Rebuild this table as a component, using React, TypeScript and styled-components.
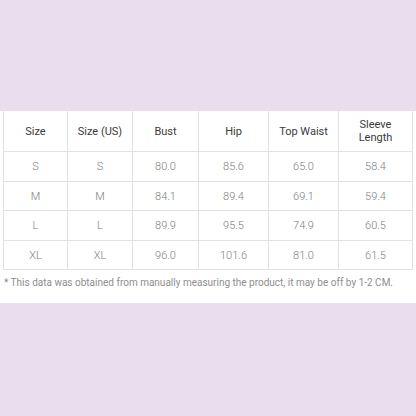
import React from 'react';
import styled, { createGlobalStyle } from 'styled-components';

const GlobalStyle = createGlobalStyle`
  html, body {
    margin: 0;
    padding: 0;
    background: #e9ddee;
    width: 416px;
    height: 416px;
    overflow: hidden;
  }
  body {
    font-family: Roboto, "Liberation Sans", sans-serif;
  }
`;

const Page = styled.div`
  padding-top: 111px;
`;

const Sheet = styled.section`
  background: #ffffff;
  height: 192px;
  padding: 0 4px 0 3px;
  box-sizing: border-box;
`;

const Table = styled.table`
  width: 409px;
  border-collapse: collapse;
  table-layout: fixed;
`;

const HeadCell = styled.th`
  height: 40px;
  border: 1px solid #e2e2e2;
  border-top: none;
  font-weight: 400;
  font-size: 11px;
  line-height: 13px;
  color: #3a3a3a;
  text-align: center;
  padding: 0 2px;
`;

const Cell = styled.td<{ $tall?: boolean }>`
  height: ${p => (p.$tall ? 29 : 28)}px;
  border: 1px solid #e2e2e2;
  font-size: 11px;
  font-weight: 300;
  color: #7e7e7e;
  text-align: center;
  padding: 0;
`;

const Note = styled.p`
  margin: 0;
  padding: 7px 0 0 1px;
  font-size: 10px;
  color: #8e8e8e;
  white-space: nowrap;
`;

const widths = [64, 65, 66, 70, 70, 74];
const headers = ['Size', 'Size (US)', 'Bust', 'Hip', 'Top Waist', 'Sleeve Length'];
const rows = [
  ['S', 'S', '80.0', '85.6', '65.0', '58.4'],
  ['M', 'M', '84.1', '89.4', '69.1', '59.4'],
  ['L', 'L', '89.9', '95.5', '74.9', '60.5'],
  ['XL', 'XL', '96.0', '101.6', '81.0', '61.5'],
];

const App = () => (
  <Page>
    <GlobalStyle />
    <Sheet>
      <Table>
        <colgroup>
          {widths.map((w, i) => (
            <col key={i} style={{ width: w }} />
          ))}
        </colgroup>
        <thead>
          <tr>
            {headers.map(h => (
              <HeadCell key={h}>
                {h === 'Sleeve Length' ? (
                  <>
                    Sleeve
                    <br />
                    Length
                  </>
                ) : (
                  h
                )}
              </HeadCell>
            ))}
          </tr>
        </thead>
        <tbody>
          {rows.map((r, ri) => (
            <tr key={ri}>
              {r.map((v, ci) => (
                <Cell key={ci} $tall={ri % 2 === 0}>
                  {v}
                </Cell>
              ))}
            </tr>
          ))}
        </tbody>
      </Table>
      <Note>* This data was obtained from manually measuring the product, it may be off by 1-2 CM.</Note>
    </Sheet>
  </Page>
);

export default App;
